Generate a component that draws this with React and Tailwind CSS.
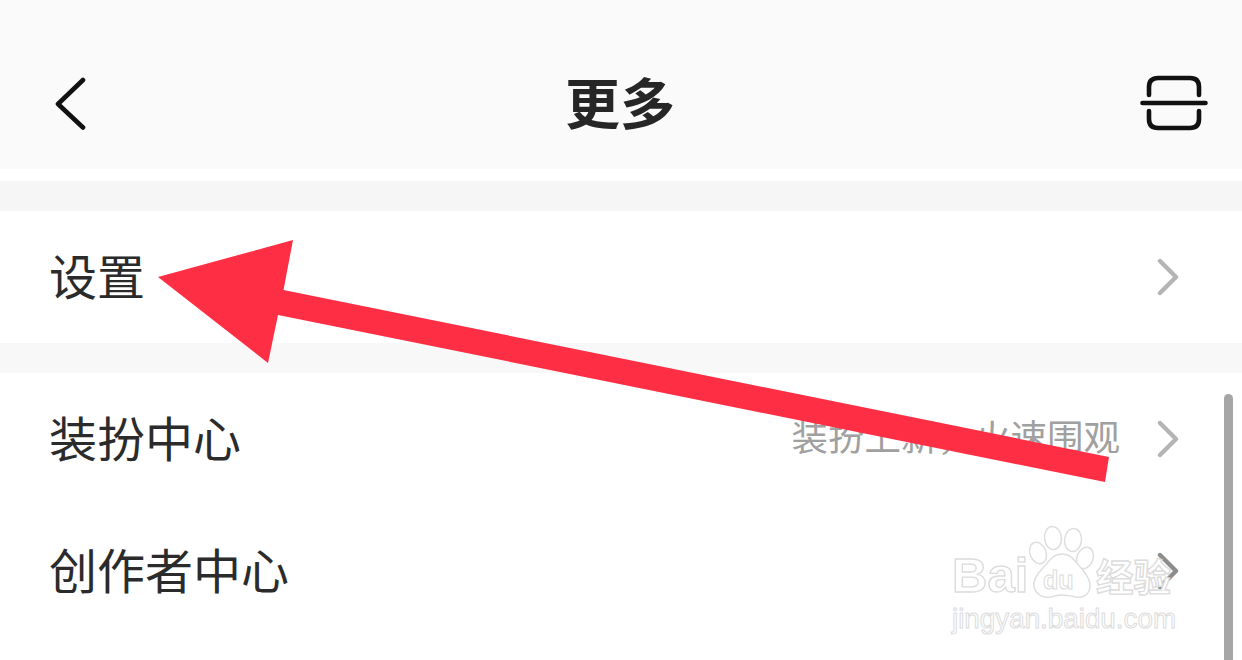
const Chevron = ({ className = 'text-[#b4b4b4]' }) => (
  <svg width="24" height="38" viewBox="0 0 24 38" fill="none" className={className}>
    <path d="M4 3 L20 19 L4 35" stroke="currentColor" strokeWidth="4.4" strokeLinecap="round" strokeLinejoin="round" />
  </svg>
);

const Row = ({ title, hint, chevronClass }) => (
  <div className="h-[132px] bg-white flex items-center justify-between pl-[49px] pr-[62px]">
    <span className="pb-[7px] text-[48px] leading-none text-[#2b2b2b]">{title}</span>
    <div className="flex items-center gap-[36px]">
      {hint && <span className="pb-[5px] text-[36.5px] leading-none text-[#a0a0a0]">{hint}</span>}
      <Chevron className={chevronClass} />
    </div>
  </div>
);

const Arrow = () => (
  <svg className="absolute inset-0 pointer-events-none" width="1242" height="660" viewBox="0 0 1242 660">
    <path d="M158 277 L293 240 L283.5 290 L1109 457 L1105 482 L278 315 L268 363 Z" fill="#fe2e44" />
  </svg>
);

const Watermark = () => (
  <div className="absolute left-[952px] top-[524px] w-[240px] flex flex-col text-white">
    <svg className="absolute inset-0" width="240" height="80" viewBox="0 0 240 80" fill="#ffffff" stroke="#dedede" strokeWidth="1.5">
      <ellipse cx="101" cy="14" rx="8.500" ry="11.500" transform="rotate(-6 101 14)" />
      <ellipse cx="121" cy="16" rx="8.500" ry="11.500" transform="rotate(6 121 16)" />
      <ellipse cx="86" cy="29" rx="8" ry="11" transform="rotate(-22 86 29)" />
      <ellipse cx="133" cy="34" rx="8" ry="11" transform="rotate(22 133 34)" />
      <path d="M110 30 C100 30 96 39 90 45 C84 51 81 57 82 63 C84 71 91 74 98 73 C103 72 106 71 110 71 C115 71 119 72 124 73 C131 74 137 71 138 63 C139 57 135 51 130 45 C124 39 120 30 110 30 Z" />
    </svg>
    <div className="relative mt-[24px] h-[54px] flex items-center">
      <span className="w-[82px] text-[49px] leading-none font-['Liberation_Sans',sans-serif] font-bold [-webkit-text-stroke:1.4px_#dcdcdc]">Bai</span>
      <span className="mt-[10px] w-[62px] pl-[9px] text-[25px] leading-none font-['Liberation_Sans',sans-serif] font-bold [-webkit-text-stroke:1px_#dcdcdc]">du</span>
      <span className="text-[37.5px] leading-none font-bold [-webkit-text-stroke:1.4px_#dcdcdc]">经验</span>
    </div>
    <span className="relative mt-[2px] text-[27.8px] leading-[30px] font-['Liberation_Sans',sans-serif] [-webkit-text-stroke:1px_#dcdcdc]">jingyan.baidu.com</span>
  </div>
);

export default function App() {
  return (
    <div className="relative w-[1242px] h-[660px] overflow-hidden bg-white font-['Noto_Sans_CJK_SC','Noto_Sans',sans-serif]">
      <header className="h-[169px] bg-[#fafafa] grid grid-cols-[511px_auto_1fr] items-center pl-[54px] pr-[34px] pt-[36px]">
        <svg width="34" height="54" viewBox="0 0 34 54" fill="none">
          <path d="M29 4 L4 28 L29 51.500" stroke="#111111" strokeWidth="4.600" strokeLinecap="round" strokeLinejoin="round" />
        </svg>
        <h1 className="pb-[4px] text-[55px] leading-none font-bold text-[#262626]">更多</h1>
        <svg className="justify-self-end" width="68" height="58" viewBox="0 0 68 58" fill="none" stroke="#111111" strokeWidth="4.600" strokeLinecap="round">
          <path d="M9 21 V13 Q9 4 18 4 H50 Q59 4 59 13 V21" />
          <path d="M9 37 V45 Q9 54 18 54 H50 Q59 54 59 45 V37" />
          <path d="M2.500 29 H65.500" />
        </svg>
      </header>
      <div className="h-[12px] bg-white" />
      <div className="h-[30px] bg-[#f6f6f6]" />
      <Row title="设置" />
      <div className="h-[30px] bg-[#f8f8f8]" />
      <Row title="装扮中心" hint="装扮上新，火速围观" />
      <Row title="创作者中心" chevronClass="text-[#8c8c8c]" />
      <div className="absolute right-[9px] top-[394px] bottom-0 w-[9px] rounded-t-full bg-[#a6a6a6]" />
      <Watermark />
      <Arrow />
    </div>
  );
}
